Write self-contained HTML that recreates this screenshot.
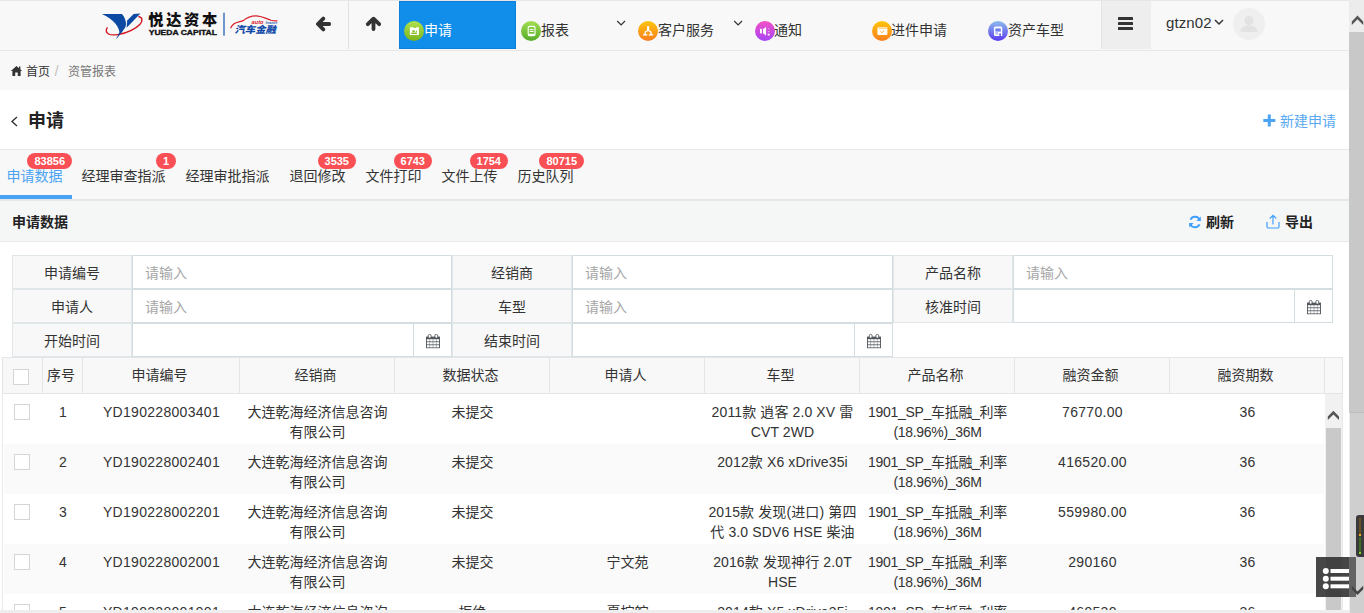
<!DOCTYPE html>
<html lang="zh-CN">
<head>
<meta charset="utf-8">
<title>申请</title>
<style>
*{box-sizing:border-box;margin:0;padding:0}
html,body{width:1364px;height:613px;overflow:hidden;background:#fff}
body{position:relative;font-family:"Liberation Sans","Noto Sans CJK SC",sans-serif;font-size:14px;color:#333}
.abs{position:absolute}
.t{position:absolute;white-space:nowrap;line-height:20px;height:20px}
/* nav */
#nav{position:absolute;left:0;top:0;width:1349px;height:51px;background:#f8f8f8;border-top:1px solid #e7e7e7;border-bottom:1px solid #e7e7e7}
#crumb{position:absolute;left:0;top:51px;width:1349px;height:39px;background:#f8f8f8}
.navtxt{font-size:14px;color:#333;top:20px}
.ico{position:absolute;width:19px;height:19px;border-radius:50%;top:21px}
/* tabs */
#tabs{position:absolute;left:0;top:149px;width:1349px;height:52px;background:#f8f8f8;border-top:1px solid #e7eaec;border-bottom:2px solid #e4e7ea}
.tab{font-size:14px;color:#333;top:166px}
.badge{position:absolute;top:153px;height:16px;border-radius:8px;background:#fa4f54;color:#fff;font-size:11px;font-weight:bold;line-height:16px;text-align:center;padding:0 7px;min-width:20px;white-space:nowrap}
#sub{position:absolute;left:0;top:201px;width:1349px;height:41px;background:#f5f7f7;border-bottom:1px solid #e7eaec}
/* form */
.lab{position:absolute;height:34px;background:#f8f8f8;border:1px solid #e1e6e9;text-align:center;line-height:34px;font-size:14px;color:#333}
.inp{position:absolute;height:34px;background:#fff;border:1px solid #d3dde2;line-height:34px;font-size:14px;color:#a6a6a6;padding-left:12px}
.cal{position:absolute;height:34px;width:39px;background:#fff;border:1px solid #d3dde2}
/* table */
.th{position:absolute;top:357px;height:37px;background:#f8f8f8;border:1px solid #e2e6e9;border-left:none;text-align:center;line-height:35px;padding-right:3px;font-size:14px;color:#333}
.row{position:absolute;left:4px;width:1320px;height:50px}
.n{letter-spacing:.3px}
.m{letter-spacing:-.3px}
.k{letter-spacing:.12px}
.row.s{background:#fafafa}
.c{position:absolute;text-align:center;line-height:20px;font-size:14px;color:#333;top:8px;white-space:nowrap}
.cb{position:absolute;left:12px;width:15px;height:15px;border:1px solid #d2d6d8;background:#fff}
</style>
</head>
<body>

<!-- NAV -->
<div id="nav"></div>
<div id="crumb"></div>
<!-- logo -->
<svg class="abs" style="left:98px;top:8px" width="190" height="36" viewBox="0 0 190 36">
  <path d="M3.900,5.900 L23.900,5.900 C26,8 27.600,11.500 28,15 C28.200,18 27,20.500 25.600,21.800 C23,25 20.500,28.500 18,31.200 C19.800,28 21.600,26 21.500,24.700 C21.300,20 17,11.500 3.900,5.900Z" fill="#0b49a2"/>
  <path d="M29.200,12.400 L35.600,5.900 L42.400,5.600 L28.600,19.700Z" fill="#0b49a2"/>
  <path d="M9.500,19.400 C7.800,21.500 7.600,24.500 10.500,26 C14,27.800 24,27 33.300,22.400 C40,19 44.500,14.500 43.900,11.200 C43.500,9.500 42,8.800 40.400,8.500" fill="none" stroke="#d3141e" stroke-width="1.400"/>
  <path d="M21.500,24.500 L18,31.200 L25,22.600Z" fill="#0b49a2"/>
  <text x="50.300" y="16.900" font-family="'Liberation Sans','Noto Sans CJK SC',sans-serif" font-weight="900" font-size="15.200" fill="#111" letter-spacing="2.700">悦达资本</text>
  <text x="50.700" y="27" font-family="'Liberation Sans',sans-serif" font-weight="bold" font-size="7.400" fill="#111" stroke="#111" stroke-width=".35" textLength="68.300" lengthAdjust="spacingAndGlyphs">YUEDA CAPITAL</text>
  <rect x="125" y="4.700" width="2" height="23" fill="#6d97cb"/>
  <path transform="translate(0,0.8)" d="M132.600,19.400 C134,16 137,13.800 141,13 C143,12.600 144.500,12.200 145.300,11.800 C148,9.500 152,7 157.600,7 C163,7 168,9.500 173,11.500 C175,12.100 177.500,12.300 179.400,12" fill="none" stroke="#d8202a" stroke-width="1.200"/>
  <text x="153.600" y="15.700" font-family="'Liberation Sans',sans-serif" font-weight="bold" font-style="italic" font-size="5.600" fill="#d8202a" textLength="12" lengthAdjust="spacingAndGlyphs">auto</text>
  <text x="167.400" y="15.600" font-family="'Liberation Sans',sans-serif" font-style="italic" font-weight="bold" font-size="4" fill="#2a63b5" textLength="12" lengthAdjust="spacingAndGlyphs">finance</text>
  <text x="136.500" y="25.300" font-family="'Liberation Sans','Noto Sans CJK SC',sans-serif" font-weight="900" font-style="italic" font-size="9.600" fill="#1048a8" textLength="41.500" lengthAdjust="spacingAndGlyphs">汽车金融</text>
</svg>
<!-- arrows -->
<svg class="abs" style="left:315px;top:16px" width="17" height="16" viewBox="0 0 17 16"><path d="M8.300 2.600 L2.900 8 L8.300 13.400 M3.300 8 H14.200" fill="none" stroke="#333" stroke-width="3.8" stroke-linecap="round" stroke-linejoin="round"/></svg>
<div class="abs" style="left:348px;top:1px;width:1px;height:48px;background:#e0e0e0"></div>
<svg class="abs" style="left:365px;top:16px" width="17" height="16" viewBox="0 0 17 16"><path d="M2.800 8.200 L8.500 2.700 L14.200 8.200 M8.500 3.200 V13.100" fill="none" stroke="#333" stroke-width="3.8" stroke-linecap="round" stroke-linejoin="round"/></svg>
<!-- active tab -->
<div class="abs" style="left:399px;top:1px;width:117px;height:48px;background:#108ee9;border:1px solid #0a80dc"></div>
<svg width="0" height="0" style="position:absolute"><defs>
<linearGradient id="gG" x1="0" y1="0" x2="0" y2="1"><stop offset="0" stop-color="#aee24e"/><stop offset="1" stop-color="#7cb31b"/></linearGradient>
<linearGradient id="gG2" x1="0" y1="0" x2="0" y2="1"><stop offset="0" stop-color="#a2de50"/><stop offset="1" stop-color="#55ab2a"/></linearGradient>
<linearGradient id="gO" x1="0" y1="0" x2="0" y2="1"><stop offset="0" stop-color="#ffc60a"/><stop offset="1" stop-color="#f97c20"/></linearGradient>
<linearGradient id="gP" x1="0" y1="0" x2="0" y2="1"><stop offset="0" stop-color="#f250c4"/><stop offset="1" stop-color="#a845f6"/></linearGradient>
<linearGradient id="gB" x1="0" y1="0" x2="0" y2="1"><stop offset="0" stop-color="#8cbcea"/><stop offset="1" stop-color="#5a3af0"/></linearGradient>
</defs></svg>
<svg class="abs" style="left:404px;top:20.8px" width="20" height="20" viewBox="0 0 20 20"><circle cx="10" cy="10" r="10" fill="url(#gG)"/><path d="M5.900 6.200 h3.800 v0.900 h2.300 v-0.900 h2.900 v7.900 h-9z" fill="#fff"/><path d="M7.200 12.900 h5.800 v-0.900 l-1 -0.500 h-3.800 l-1 0.500z M8.400 9.200 h2.400 v1.800 h-2.400z M12.100 9.600 l1 .3 -.6 1.500 -.8 -.3z" fill="#86bd25"/></svg>
<div class="t navtxt" style="left:424px;color:#fff">申请</div>
<svg class="abs" style="left:520.7px;top:20.8px" width="20" height="20" viewBox="0 0 20 20"><circle cx="10" cy="10" r="10" fill="url(#gG2)"/><rect x="7.200" y="5.400" width="6.800" height="9.200" rx="1.300" fill="none" stroke="#fff" stroke-width="1.100"/><path d="M8.700 8.700 h3.800 M8.700 10.500 h3.800" stroke="#fff" stroke-width="1"/><path d="M7.200 13.400 h6.800" stroke="#fff" stroke-width="1.300"/></svg>
<div class="t navtxt" style="left:541px">报表</div>
<svg class="abs" style="left:616px;top:20px" width="10" height="7" viewBox="0 0 10 7"><path d="M1.200 1 L5.100 5 L9 1" fill="none" stroke="#333" stroke-width="1.200"/></svg>
<svg class="abs" style="left:637.9px;top:20.7px" width="20" height="20" viewBox="0 0 20 20"><circle cx="10" cy="10" r="10" fill="url(#gO)"/><path d="M9 5.200 h2.200 v4 l2.500 1.500 v2.600 h1.500 v1.100 h-4.400 v-1.100 h1.400 v-2 l-2.100 -1.300 l-2.100 1.300 v2 h1.400 v1.100 h-4.400 v-1.100 h1.500 v-2.600 l2.500 -1.500z" fill="#fff"/></svg>
<div class="t navtxt" style="left:658px">客户服务</div>
<svg class="abs" style="left:733px;top:20px" width="10" height="7" viewBox="0 0 10 7"><path d="M1.200 1 L5.100 5 L9 1" fill="none" stroke="#333" stroke-width="1.200"/></svg>
<svg class="abs" style="left:754.9px;top:20.7px" width="20" height="20" viewBox="0 0 20 20"><circle cx="10" cy="10" r="10" fill="url(#gP)"/><rect x="5" y="7.800" width="1.900" height="4.600" fill="#fff"/><path d="M8 7.900 L11.100 5.900 V14.400 L8 12.300Z" fill="#fff"/><rect x="12.800" y="12.700" width="1.800" height="1.800" fill="#fff"/><rect x="12.800" y="9.900" width="1.800" height="1.300" fill="#fff" opacity=".45"/><rect x="12.800" y="7.100" width="1.800" height="1.200" fill="#fff" opacity=".35"/></svg>
<div class="t navtxt" style="left:774px">通知</div>
<svg class="abs" style="left:871.7px;top:20.8px" width="20" height="20" viewBox="0 0 20 20"><circle cx="10" cy="10" r="10" fill="url(#gO)"/><rect x="5.400" y="6.200" width="10" height="7.900" rx="1" fill="#fff"/><path d="M6.200 7.300 h9.200" stroke="#fcae1c" stroke-width=".6"/><path d="M8.400 10.300 l1.500 1.400 l2.300 -2.100" stroke="#f99a1c" stroke-width=".9" fill="none"/></svg>
<div class="t navtxt" style="left:891px">进件申请</div>
<svg class="abs" style="left:987.9px;top:20.8px" width="20" height="20" viewBox="0 0 20 20"><circle cx="10" cy="10" r="10" fill="url(#gB)"/><path d="M7.400 5.500 h5.400 a1.500 1.500 0 0 1 1.500 1.500 v7.900 h-1.400 v-2.700 h-1.600 v2.700 h-3.900 a1.500 1.500 0 0 1 -1.500 -1.500 v-6.400 a1.500 1.500 0 0 1 1.500 -1.500z" fill="#fff"/><rect x="7.300" y="7.400" width="5.500" height="3.200" fill="#6f7ff0"/><rect x="7.300" y="11.500" width="2.800" height="1" fill="#7a86f2"/><rect x="7.300" y="13.200" width="3.800" height=".5" fill="#6a5af0" opacity=".5"/></svg>
<div class="t navtxt" style="left:1008px">资产车型</div>
<!-- hamburger -->
<div class="abs" style="left:1101px;top:1px;width:50px;height:48px;background:#eeeeee;border-left:1px solid #e4e4e4"></div>
<div class="abs" style="left:1118px;top:17px;width:15px;height:3px;background:#333;box-shadow:0 5px 0 #333,0 10px 0 #333;border-radius:.5px"></div>
<div class="t" style="left:1166px;top:13px;font-size:15px;color:#333;letter-spacing:.1px">gtzn02</div>
<svg class="abs" style="left:1214px;top:19px" width="10" height="7" viewBox="0 0 10 7"><path d="M1 1 L5 5 L9 1" fill="none" stroke="#333" stroke-width="1.5"/></svg>
<svg class="abs" style="left:1233px;top:8px" width="32" height="32" viewBox="0 0 32 32"><circle cx="16" cy="16" r="16" fill="#efefef"/><circle cx="16" cy="12.5" r="4.6" fill="#e2e2e2"/><path d="M7.5 24 c0-5 4-6.5 8.500-6.500 s8.500 1.500 8.500 6.500z" fill="#e2e2e2"/></svg>
<!-- breadcrumb -->
<svg class="abs" style="left:10px;top:64.800px" width="13" height="12" viewBox="0 0 13 12"><path d="M6.500 1 L0.800 6 H2.400 V11 H5.200 V7.600 H7.800 V11 H10.600 V6 H12.200 L10.400 4.400 V1.600 H9 V3.200Z" fill="#333"/></svg>
<div class="t" style="left:26px;top:62px;font-size:12px;color:#333">首页</div>
<div class="t" style="left:54.500px;top:61px;font-size:15px;color:#c4c4c4">/</div>
<div class="t" style="left:68px;top:62px;font-size:12px;color:#777">资管报表</div>
<!-- page scrollbar -->
<div class="abs" style="left:1349px;top:0;width:15px;height:613px;background:#ececec"></div>
<div class="abs" style="left:1349px;top:32px;width:15px;height:380px;background:#c8c8c8"></div>
<svg class="abs" style="left:1349px;top:0" width="15" height="32" viewBox="0 0 15 32"><path d="M8.500 15.600 L14.200 21.500 V24.900 L8.500 19.300 L2.800 24.900 V21.500Z" fill="#555"/></svg>

<!-- TITLE -->
<svg class="abs" style="left:10px;top:116px" width="9" height="11" viewBox="0 0 9 11"><path d="M7 1 L2 5.500 L7 10" fill="none" stroke="#333" stroke-width="1.400"/></svg>
<div class="t" style="left:28px;top:109px;height:24px;line-height:24px;font-size:18px;font-weight:bold;color:#222">申请</div>
<svg class="abs" style="left:1263px;top:114px" width="13" height="13" viewBox="0 0 13 13"><path d="M6.300 0.500 V12.500 M0.300 6.500 H12.300" stroke="#4aa3f3" stroke-width="3"/></svg>
<div class="t" style="left:1280px;top:111px;color:#58a9f0">新建申请</div>
<!-- TABS -->
<div id="tabs"></div>
<div class="abs" style="left:0;top:195px;width:72px;height:4px;background:#4aa3f3"></div>

<div class="t tab" style="left:6.5px;color:#4aa3f3">申请数据</div>
<div class="badge" style="right:1292px">83856</div>
<div class="t tab" style="left:81.5px">经理审查指派</div>
<div class="badge" style="right:1188px">1</div>
<div class="t tab" style="left:185.5px">经理审批指派</div>
<div class="t tab" style="left:289.5px">退回修改</div>
<div class="badge" style="right:1008px">3535</div>
<div class="t tab" style="left:365.5px">文件打印</div>
<div class="badge" style="right:932px">6743</div>
<div class="t tab" style="left:441.5px">文件上传</div>
<div class="badge" style="right:856px">1754</div>
<div class="t tab" style="left:517.5px">历史队列</div>
<div class="badge" style="right:780px">80715</div>

<!-- SUB -->
<div id="sub"></div>
<div class="t" style="left:12px;top:212px;font-weight:bold;color:#222">申请数据</div>
<svg class="abs" style="left:1188px;top:215px" width="14" height="14" viewBox="0 0 14 14"><path d="M11.800 5.200 A5 5 0 0 0 2.500 4.600 M2.200 8.800 A5 5 0 0 0 11.500 9.400" fill="none" stroke="#409eff" stroke-width="2"/><path d="M12.800 1.600 V6 H8.400Z M1.200 12.400 V8 H5.600Z" fill="#409eff"/></svg>
<div class="t" style="left:1206px;top:212px;font-weight:bold;color:#222">刷新</div>
<svg class="abs" style="left:1266px;top:214px" width="14" height="15" viewBox="0 0 14 15"><path d="M1 8 V12.500 a1.500 1.500 0 0 0 1.500 1.500 h9 a1.500 1.500 0 0 0 1.500 -1.500 V8" fill="none" stroke="#409eff" stroke-width="1.200"/><path d="M7 10.500 V1.500 M3.800 4.500 L7 1.300 L10.200 4.500" fill="none" stroke="#409eff" stroke-width="1.200"/></svg>
<div class="t" style="left:1285px;top:212px;font-weight:bold;color:#222">导出</div>
<!-- FORM -->

<div class="lab" style="left:12px;top:255px;width:120px">申请编号</div>
<div class="inp" style="left:132px;top:255px;width:320px">请输入</div>
<div class="lab" style="left:452px;top:255px;width:120px">经销商</div>
<div class="inp" style="left:572px;top:255px;width:321px">请输入</div>
<div class="lab" style="left:893px;top:255px;width:120px">产品名称</div>
<div class="inp" style="left:1013px;top:255px;width:320px">请输入</div>
<div class="lab" style="left:12px;top:289px;width:120px">申请人</div>
<div class="inp" style="left:132px;top:289px;width:320px">请输入</div>
<div class="lab" style="left:452px;top:289px;width:120px">车型</div>
<div class="inp" style="left:572px;top:289px;width:321px">请输入</div>
<div class="lab" style="left:893px;top:289px;width:120px">核准时间</div>
<div class="inp" style="left:1013px;top:289px;width:282px"></div>
<div class="cal" style="left:1294px;top:289px"><svg style="position:absolute;left:12px;top:9.7px" width="14" height="15" viewBox="0 0 14 15"><path d="M0 2.600 h14 v11.600 h-14z" fill="#50565b"/><rect x="2.300" y="0.500" width="2.800" height="3.600" rx="1.200" fill="#fff" stroke="#50565b" stroke-width=".9"/><rect x="8.900" y="0.500" width="2.800" height="3.600" rx="1.200" fill="#fff" stroke="#50565b" stroke-width=".9"/><g fill="#fff"><rect x="0.9" y="5.2" width="2.75" height="2.2"/><rect x="4.05" y="5.2" width="2.75" height="2.2"/><rect x="7.2" y="5.2" width="2.75" height="2.2"/><rect x="10.35" y="5.2" width="2.75" height="2.2"/><rect x="0.9" y="8.2" width="2.75" height="2.2"/><rect x="4.05" y="8.2" width="2.75" height="2.2"/><rect x="7.2" y="8.2" width="2.75" height="2.2"/><rect x="10.35" y="8.2" width="2.75" height="2.2"/><rect x="0.9" y="11.2" width="2.75" height="2.2"/><rect x="4.05" y="11.2" width="2.75" height="2.2"/><rect x="7.2" y="11.2" width="2.75" height="2.2"/><rect x="10.35" y="11.2" width="2.75" height="2.2"/></g></svg></div>
<div class="lab" style="left:12px;top:323px;width:120px">开始时间</div>
<div class="inp" style="left:132px;top:323px;width:282px"></div>
<div class="cal" style="left:413px;top:323px"><svg style="position:absolute;left:12px;top:9.7px" width="14" height="15" viewBox="0 0 14 15"><path d="M0 2.600 h14 v11.600 h-14z" fill="#50565b"/><rect x="2.300" y="0.500" width="2.800" height="3.600" rx="1.200" fill="#fff" stroke="#50565b" stroke-width=".9"/><rect x="8.900" y="0.500" width="2.800" height="3.600" rx="1.200" fill="#fff" stroke="#50565b" stroke-width=".9"/><g fill="#fff"><rect x="0.9" y="5.2" width="2.75" height="2.2"/><rect x="4.05" y="5.2" width="2.75" height="2.2"/><rect x="7.2" y="5.2" width="2.75" height="2.2"/><rect x="10.35" y="5.2" width="2.75" height="2.2"/><rect x="0.9" y="8.2" width="2.75" height="2.2"/><rect x="4.05" y="8.2" width="2.75" height="2.2"/><rect x="7.2" y="8.2" width="2.75" height="2.2"/><rect x="10.35" y="8.2" width="2.75" height="2.2"/><rect x="0.9" y="11.2" width="2.75" height="2.2"/><rect x="4.05" y="11.2" width="2.75" height="2.2"/><rect x="7.2" y="11.2" width="2.75" height="2.2"/><rect x="10.35" y="11.2" width="2.75" height="2.2"/></g></svg></div>
<div class="lab" style="left:452px;top:323px;width:120px">结束时间</div>
<div class="inp" style="left:572px;top:323px;width:283px"></div>
<div class="cal" style="left:854px;top:323px"><svg style="position:absolute;left:12px;top:9.7px" width="14" height="15" viewBox="0 0 14 15"><path d="M0 2.600 h14 v11.600 h-14z" fill="#50565b"/><rect x="2.300" y="0.500" width="2.800" height="3.600" rx="1.200" fill="#fff" stroke="#50565b" stroke-width=".9"/><rect x="8.900" y="0.500" width="2.800" height="3.600" rx="1.200" fill="#fff" stroke="#50565b" stroke-width=".9"/><g fill="#fff"><rect x="0.9" y="5.2" width="2.75" height="2.2"/><rect x="4.05" y="5.2" width="2.75" height="2.2"/><rect x="7.2" y="5.2" width="2.75" height="2.2"/><rect x="10.35" y="5.2" width="2.75" height="2.2"/><rect x="0.9" y="8.2" width="2.75" height="2.2"/><rect x="4.05" y="8.2" width="2.75" height="2.2"/><rect x="7.2" y="8.2" width="2.75" height="2.2"/><rect x="10.35" y="8.2" width="2.75" height="2.2"/><rect x="0.9" y="11.2" width="2.75" height="2.2"/><rect x="4.05" y="11.2" width="2.75" height="2.2"/><rect x="7.2" y="11.2" width="2.75" height="2.2"/><rect x="10.35" y="11.2" width="2.75" height="2.2"/></g></svg></div>

<!-- TABLE -->
<div class="abs" style="left:2px;top:357px;width:1341px;height:256px;border-left:1px solid #e7eaec;border-right:1px solid #e7eaec;background:#fff"></div>
<div class="th" style="left:2px;width:41px;border-left:1px solid #e2e6e9;"></div>
<div class="th" style="left:43px;width:40px;">序号</div>
<div class="th" style="left:83px;width:157px;">申请编号</div>
<div class="th" style="left:240px;width:155px;">经销商</div>
<div class="th" style="left:395px;width:155px;">数据状态</div>
<div class="th" style="left:550px;width:155px;">申请人</div>
<div class="th" style="left:705px;width:155px;">车型</div>
<div class="th" style="left:860px;width:155px;">产品名称</div>
<div class="th" style="left:1015px;width:155px;">融资金额</div>
<div class="th" style="left:1170px;width:155px;">融资期数</div>
<div class="th" style="left:1325px;width:18px;"></div>
<div class="cb" style="left:13px;top:369px;width:16px;height:16px"></div>
<div class="row" style="top:394px">
<div class="cb" style="left:10px;top:10px;width:16px;height:16px"></div>
<div class="c n" style="left:39px;width:40px">1</div>
<div class="c n" style="left:79px;width:157px">YD190228003401</div>
<div class="c" style="left:236px;width:155px">大连乾海经济信息咨询<br>有限公司</div>
<div class="c" style="left:391px;width:155px">未提交</div>
<div class="c k" style="left:701px;width:155px">2011款 逍客 2.0 XV 雷<br>CVT 2WD</div>
<div class="c m" style="left:856px;width:155px">1901_SP_车抵融_利率<br>(18.96%)_36M</div>
<div class="c n" style="left:1011px;width:155px">76770.00</div>
<div class="c n" style="left:1166px;width:155px">36</div>
</div>
<div class="row s" style="top:444px">
<div class="cb" style="left:10px;top:10px;width:16px;height:16px"></div>
<div class="c n" style="left:39px;width:40px">2</div>
<div class="c n" style="left:79px;width:157px">YD190228002401</div>
<div class="c" style="left:236px;width:155px">大连乾海经济信息咨询<br>有限公司</div>
<div class="c" style="left:391px;width:155px">未提交</div>
<div class="c k" style="left:701px;width:155px">2012款 X6 xDrive35i</div>
<div class="c m" style="left:856px;width:155px">1901_SP_车抵融_利率<br>(18.96%)_36M</div>
<div class="c n" style="left:1011px;width:155px">416520.00</div>
<div class="c n" style="left:1166px;width:155px">36</div>
</div>
<div class="row" style="top:494px">
<div class="cb" style="left:10px;top:10px;width:16px;height:16px"></div>
<div class="c n" style="left:39px;width:40px">3</div>
<div class="c n" style="left:79px;width:157px">YD190228002201</div>
<div class="c" style="left:236px;width:155px">大连乾海经济信息咨询<br>有限公司</div>
<div class="c" style="left:391px;width:155px">未提交</div>
<div class="c k" style="left:701px;width:155px">2015款 发现(进口) 第四<br>代 3.0 SDV6 HSE 柴油</div>
<div class="c m" style="left:856px;width:155px">1901_SP_车抵融_利率<br>(18.96%)_36M</div>
<div class="c n" style="left:1011px;width:155px">559980.00</div>
<div class="c n" style="left:1166px;width:155px">36</div>
</div>
<div class="row s" style="top:544px">
<div class="cb" style="left:10px;top:10px;width:16px;height:16px"></div>
<div class="c n" style="left:39px;width:40px">4</div>
<div class="c n" style="left:79px;width:157px">YD190228002001</div>
<div class="c" style="left:236px;width:155px">大连乾海经济信息咨询<br>有限公司</div>
<div class="c" style="left:391px;width:155px">未提交</div>
<div class="c" style="left:546px;width:155px">宁文苑</div>
<div class="c k" style="left:701px;width:155px">2016款 发现神行 2.0T<br>HSE</div>
<div class="c m" style="left:856px;width:155px">1901_SP_车抵融_利率<br>(18.96%)_36M</div>
<div class="c n" style="left:1011px;width:155px">290160</div>
<div class="c n" style="left:1166px;width:155px">36</div>
</div>
<div class="row" style="top:594px">
<div class="cb" style="left:10px;top:10px;width:16px;height:16px"></div>
<div class="c n" style="left:39px;width:40px">5</div>
<div class="c n" style="left:79px;width:157px">YD190228001901</div>
<div class="c" style="left:236px;width:155px">大连乾海经济信息咨询<br>有限公司</div>
<div class="c" style="left:391px;width:155px">拒绝</div>
<div class="c" style="left:546px;width:155px">夏棕皖</div>
<div class="c k" style="left:701px;width:155px">2014款 X5 xDrive35i</div>
<div class="c m" style="left:856px;width:155px">1901_SP_车抵融_利率<br>(18.96%)_36M</div>
<div class="c n" style="left:1011px;width:155px">469530</div>
<div class="c n" style="left:1166px;width:155px">36</div>
</div>

<!-- inner scrollbar -->
<div class="abs" style="left:1325px;top:394px;width:17px;height:219px;background:#f1f1f1"></div>
<div class="abs" style="left:1326px;top:428px;width:15px;height:185px;background:#c9c9c9"></div>
<svg class="abs" style="left:1325px;top:405px" width="17" height="20" viewBox="0 0 17 20"><path d="M8.400 5.800 L14 11.600 V15 L8.400 9.400 L2.800 15 V11.600Z" fill="#555"/></svg>
<!-- bottom strip -->
<div class="abs" style="left:0;top:610px;width:1349px;height:3px;background:#eeeeee"></div>
<!-- page scrollbar lower -->
<div class="abs" style="left:1349px;top:412px;width:15px;height:201px;background:#cfcfcf;border-left:1px solid #ececec;border-top:1px solid #bdbdbd"></div>
<!-- floating widgets -->
<div class="abs" style="left:1356px;top:515px;width:8px;height:42px;background:#3a3a3a;border-radius:3px 0 0 3px"></div>
<div class="abs" style="left:1359px;top:518px;width:2px;height:17px;background:#6b5127"></div>
<div class="abs" style="left:1359px;top:534px;width:2px;height:2px;background:#f5a623"></div>
<div class="abs" style="left:1359px;top:537px;width:2px;height:16px;background:#3f6b26"></div>
<div class="abs" style="left:1359px;top:552px;width:2px;height:2px;background:#7ed321"></div>
<div class="abs" style="left:1316px;top:557px;width:33px;height:40px;background:rgba(45,45,45,.88)"></div>
<div class="abs" style="left:1349px;top:557px;width:7px;height:40px;background:rgba(80,80,80,.85)"></div>
<svg class="abs" style="left:1316px;top:557px" width="40" height="40" viewBox="0 0 40 40"><g fill="#fff"><circle cx="9.800" cy="14" r="3"/><circle cx="9.800" cy="21.700" r="3"/><circle cx="9.800" cy="29.300" r="3"/><rect x="14.500" y="12" width="18.500" height="4"/><rect x="14.500" y="19.700" width="18.500" height="4"/><rect x="14.500" y="27.300" width="18.500" height="4"/></g></svg>
<svg class="abs" style="left:1349px;top:582px" width="15" height="16" viewBox="0 0 15 16"><path d="M8.500 13 L14.200 7.200 V3.800 L8.500 9.400 L2.800 3.800 V7.200Z" fill="#444"/></svg>

</body>
</html>
